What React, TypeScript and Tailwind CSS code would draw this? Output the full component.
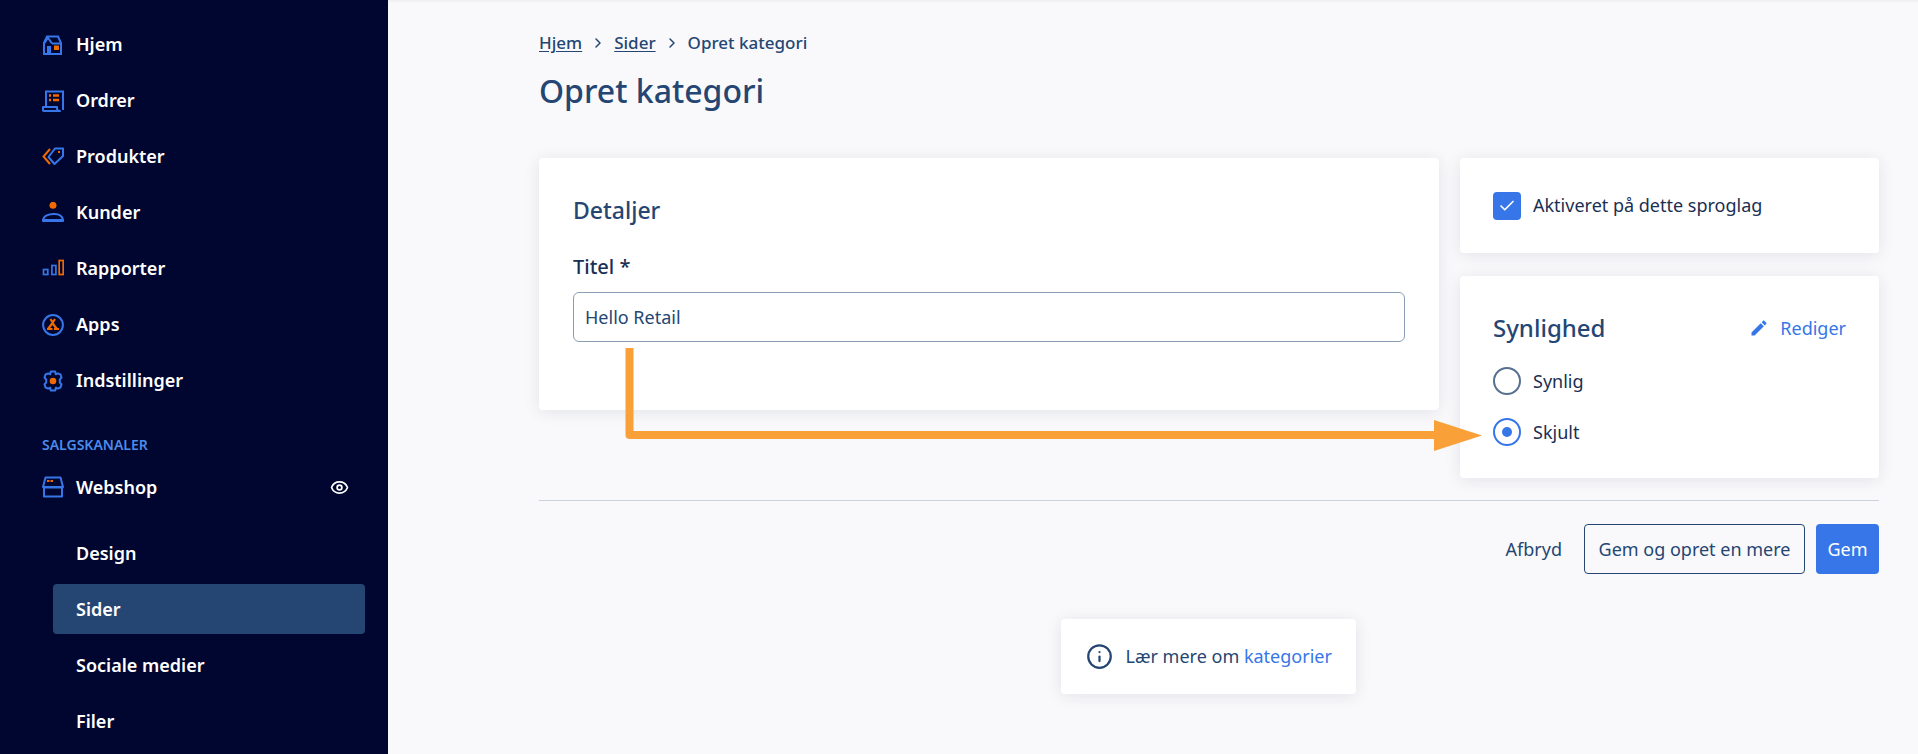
import React from 'react';
import { ChevronRight, Check, Eye, Info } from 'lucide-react';

const blue = '#3776e8';
const orange = '#f06a00';

const HomeIcon = () => (
  <svg width="22" height="22" viewBox="0 0 22 22" fill="none">
    <path d="M2 9l3-6.500h11l3 6.500v11H2z" stroke={blue} strokeWidth="2" />
    <path d="M2 9.500L6 4l4 5.500M10 9.500h9" stroke={blue} strokeWidth="2" />
    <rect x="5" y="12" width="4" height="8" fill={blue} />
    <rect x="12" y="11.500" width="5" height="4.500" fill={orange} />
  </svg>
);

const OrderIcon = () => (
  <svg width="22" height="22" viewBox="0 0 22 22" fill="none">
    <path d="M4 16V1.500h17V20" stroke={blue} strokeWidth="2" />
    <path d="M1 20.500v-3.500h14v1.500q0 2.500 3 2.500H2.500q-1.500 0-1.500-0.500z" stroke={blue} strokeWidth="2" strokeLinejoin="round" />
    <path d="M7 5.500h2M7 10h2M11 5.500h6M11 10h6" stroke={orange} strokeWidth="2.500" />
  </svg>
);

const TagIcon = () => (
  <svg width="22" height="22" viewBox="0 0 22 22" fill="none">
    <path d="M8 3L1.500 10.500 8 18" stroke={orange} strokeWidth="2" />
    <path d="M13 2.500h8v7.500l-8.500 8-6-7z" stroke={blue} strokeWidth="2" strokeLinejoin="round" />
    <rect x="16" y="5" width="2" height="2" fill={orange} />
  </svg>
);

const PersonIcon = () => (
  <svg width="22" height="22" viewBox="0 0 22 22" fill="none">
    <circle cx="11" cy="3.300" r="3.500" fill={orange} />
    <path d="M1 19v-1q1-5.500 10-6t10 6v1z" stroke={blue} strokeWidth="2" strokeLinejoin="round" />
    <path d="M2 17.500h18" stroke={blue} strokeWidth="1" />
  </svg>
);

const ChartIcon = () => (
  <svg width="22" height="22" viewBox="0 0 22 22" fill="none">
    <rect x="1.500" y="11.500" width="4.300" height="5" stroke={blue} strokeWidth="1.700" />
    <rect x="9.900" y="7.500" width="4" height="9" stroke={blue} strokeWidth="1.700" />
    <rect x="17.200" y="2.500" width="4" height="14" stroke={orange} strokeWidth="1.700" />
  </svg>
);

const AppsIcon = () => (
  <svg width="22" height="22" viewBox="0 0 22 22" fill="none">
    <circle cx="11" cy="11" r="9.900" stroke={blue} strokeWidth="2" />
    <path d="M8.500 5l3 5M13 5L9 11l-3 4M11 10l4 5M5 15h5.500M12 15h5" stroke={orange} strokeWidth="2.200" />
  </svg>
);

const GearIcon = () => (
  <svg width="22" height="22" viewBox="0 0 22 22" fill="none">
    <path d="M8.800 1.500h4.400l.6 2.800 2-.9 2.700 1.100 1 3.300-1.700 1.700v3l1.700 1.700-1 3.300-2.700 1.100-2-.9-.6 2.800H8.800l-.6-2.800-2 .9-2.700-1.100-1-3.300 1.700-1.700v-3L2.500 7.800l1-3.300 2.700-1.100 2 .9z" stroke={blue} strokeWidth="2" strokeLinejoin="round" />
    <circle cx="11" cy="11" r="3.300" fill={orange} />
  </svg>
);

const ShopIcon = () => (
  <svg width="22" height="22" viewBox="0 0 22 22" fill="none">
    <path d="M1 11l2.500-9.500h15L21 11z" stroke={blue} strokeWidth="2" strokeLinejoin="round" />
    <path d="M1 11.500h20M2 11.500v9h18v-9" stroke={blue} strokeWidth="2" strokeLinejoin="round" />
    <path d="M5 5h2.500M8.500 5h2.500" stroke={orange} strokeWidth="2" />
  </svg>
);

const mainItems = [
  { label: 'Hjem', icon: <HomeIcon /> },
  { label: 'Ordrer', icon: <OrderIcon /> },
  { label: 'Produkter', icon: <TagIcon /> },
  { label: 'Kunder', icon: <PersonIcon /> },
  { label: 'Rapporter', icon: <ChartIcon /> },
  { label: 'Apps', icon: <AppsIcon /> },
  { label: 'Indstillinger', icon: <GearIcon /> },
];

const subItems = ['Design', 'Sider', 'Sociale medier', 'Filer'];

const Sidebar = () => (
  <aside className="w-[388px] h-full shrink-0 bg-[#00062f] text-white text-[18px] font-semibold overflow-hidden pt-[17px]">
    {mainItems.map((item) => (
      <div key={item.label} className="h-[56px] flex items-center pl-[42px]">
        <span className="w-[34px] shrink-0 flex">{item.icon}</span>
        <span className="pb-[2px]">{item.label}</span>
      </div>
    ))}
    <div className="pl-[42px] mt-[26px] text-[14px] leading-[20px] text-[#4c8bea]">SALGSKANALER</div>
    <div className="h-[56px] mt-[4px] flex items-center pl-[42px] pr-[39px]">
      <span className="w-[34px] shrink-0 flex">
        <ShopIcon />
      </span>
      <span className="flex-1">Webshop</span>
      <Eye size={19} strokeWidth={2.2} />
    </div>
    <div className="mt-[13px] ml-[53px] mr-[23px] flex flex-col gap-[6px]">
      {subItems.map((label) => (
        <div
          key={label}
          className={
            label === 'Sider'
              ? 'h-[50px] shrink-0 flex items-center pl-[23px] rounded bg-[#254672]'
              : 'h-[50px] shrink-0 flex items-center pl-[23px] rounded'
          }
        >
          {label}
        </div>
      ))}
    </div>
  </aside>
);

const Card = ({ className, children }: { className: string; children: React.ReactNode }) => (
  <div className={'bg-white rounded shadow-[0_2px_16px_rgba(30,40,70,0.10)] ' + className}>{children}</div>
);

const App: React.FC = () => {
  return (
    <div className="w-[1918px] h-[754px] flex overflow-hidden bg-[#f9f9fb] text-[#254672] font-['Noto_Sans','Open_Sans',sans-serif]">
      <Sidebar />
      <main className="relative flex-1 pl-[151px] pr-[39px] shadow-[inset_0_3px_3px_-2px_rgba(0,0,0,0.06)]">
        <nav className="flex items-center h-[24px] mt-[31px] text-[17px] font-medium">
          <a className="underline underline-offset-2">Hjem</a>
          <ChevronRight size={16} strokeWidth={2.2} className="mx-[8px]" />
          <a className="underline underline-offset-2">Sider</a>
          <ChevronRight size={16} strokeWidth={2.2} className="mx-[8px]" />
          <span>Opret kategori</span>
        </nav>
        <h1 className="mt-[14px] text-[32px] leading-[44px] font-medium">Opret kategori</h1>
        <div className="mt-[45px] flex gap-[21px]">
          <Card className="w-[900px] h-[252px] px-[34px] pt-[37px]">
            <h2 className="text-[23px] leading-[30px] font-medium">Detaljer</h2>
            <div className="mt-[29px] text-[20px] leading-[26px] font-medium text-[#1a2f52]">Titel *</div>
            <div className="mt-[12px] h-[50px] flex items-center px-[11px] rounded-md border border-[#8a9fb5] text-[18px]">
              Hello Retail
            </div>
          </Card>
          <div className="w-[419px] flex flex-col gap-[23px]">
            <Card className="h-[95px] flex items-center px-[33px]">
              <span className="w-[28px] h-[28px] rounded bg-[#3776e8] flex items-center justify-center">
                <Check size={18} strokeWidth={2.2} className="text-white" />
              </span>
              <span className="ml-[12px] text-[18px] text-[#1a2f52]">Aktiveret på dette sproglag</span>
            </Card>
            <Card className="h-[202px] px-[33px] pt-[36px]">
              <div className="flex items-center justify-between h-[32px]">
                <h2 className="text-[24px] font-medium">Synlighed</h2>
                <span className="flex items-center text-[18px] text-[#3776e8]">
                  <svg width="20" height="20" viewBox="0 0 24 24" fill="#3776e8" className="mr-[11px]">
                    <path d="M3 17.250V21h3.750L17.810 9.940l-3.750-3.750L3 17.250zM20.710 7.040c.39-.39.39-1.020 0-1.410l-2.340-2.340c-.39-.39-1.020-.39-1.410 0l-1.830 1.830 3.750 3.750 1.830-1.830z" />
                  </svg>
                  Rediger
                </span>
              </div>
              <div className="mt-[23px] flex items-center h-[28px] text-[18px] text-[#1a2f52]">
                <span className="w-[28px] h-[28px] rounded-full border-2 border-[#58708f]" />
                <span className="ml-[12px]">Synlig</span>
              </div>
              <div className="mt-[23px] flex items-center h-[28px] text-[18px] text-[#1a2f52]">
                <span className="w-[28px] h-[28px] rounded-full border-2 border-[#3776e8] flex items-center justify-center">
                  <span className="w-[10px] h-[10px] rounded-full bg-[#3776e8]" />
                </span>
                <span className="ml-[12px]">Skjult</span>
              </div>
            </Card>
          </div>
        </div>
        <div className="mt-[22px] h-px bg-[#c9d2dd]" />
        <div className="mt-[23px] flex items-center justify-end text-[18px]">
          <span className="mr-[22px]">Afbryd</span>
          <span className="h-[50px] w-[221px] flex items-center justify-center rounded border border-[#254672] mr-[11px]">
            Gem og opret en mere
          </span>
          <span className="h-[50px] w-[63px] flex items-center justify-center rounded bg-[#3776e8] text-white">Gem</span>
        </div>
        <div className="mt-[45px] flex justify-center pr-[2px]">
          <Card className="w-[295px] h-[75px] flex items-center pl-[25px] text-[18px]">
            <Info size={27} strokeWidth={2} className="mr-[13px] shrink-0" />
            <span className="whitespace-nowrap">
              Lær mere om <span className="text-[#3776e8]">kategorier</span>
            </span>
          </Card>
        </div>
        {/* orange annotation arrow drawn over the form */}
        <svg className="absolute left-[230px] top-[340px]" width="870" height="120" viewBox="0 0 870 120" fill="none">
          <path d="M11.500 8v87h806" stroke="#f9a138" strokeWidth="8" strokeLinejoin="round" />
          <path d="M816 80l48 15.500-48 15.500z" fill="#f9a138" />
        </svg>
      </main>
    </div>
  );
};

export default App;
